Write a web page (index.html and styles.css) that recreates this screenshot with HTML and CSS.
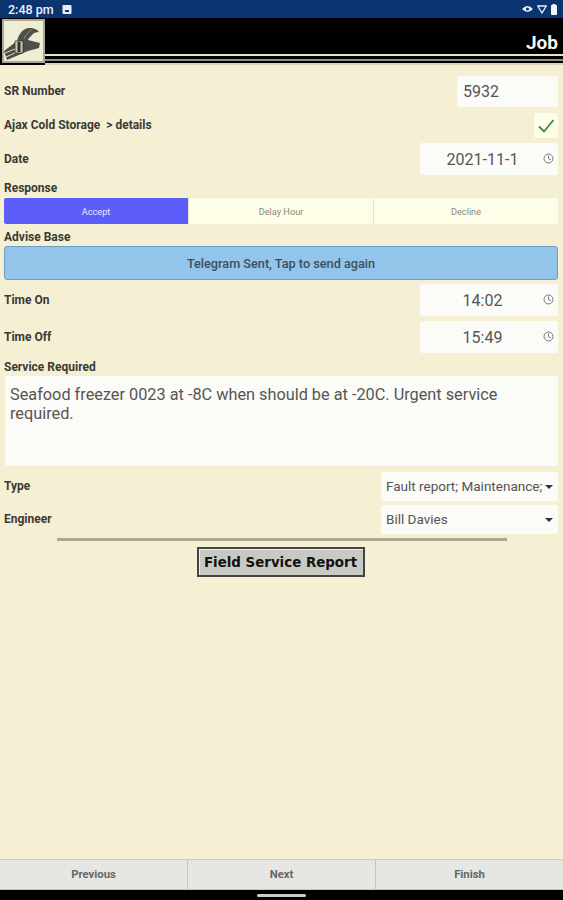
FILE: index.html
```html
<!DOCTYPE html>
<html lang="en">
<head>
    <meta charset="UTF-8">
    <meta name="viewport" content="width=device-width, initial-scale=1.0">
    <title>Job</title>
    <link rel="stylesheet" href="styles.css">
</head>
<body>
    <div class="status-bar">
        <div class="status-left">
            <span class="clock">2:48 pm</span>
            <svg class="status-icon" width="10" height="9" viewBox="0 0 10 9"><rect x="0.5" y="0" width="9" height="9" rx="1" fill="#e8eef6"/><rect x="3" y="5" width="4" height="2" fill="#0a3570"/></svg>
        </div>
        <div class="status-right">
            <svg width="11" height="8" viewBox="0 0 11 8"><path d="M0 4 Q5.500 -2 11 4 Q5.500 10 0 4Z" fill="#e8eef6"/><circle cx="5.500" cy="4" r="1.600" fill="#0a3570"/></svg>
            <svg width="10" height="9" viewBox="0 0 10 9"><path d="M0.800 1 H9.200 L5 8Z" fill="none" stroke="#e8eef6" stroke-width="1.300"/></svg>
            <svg width="6" height="11" viewBox="0 0 6 11"><rect x="0" y="1" width="6" height="10" rx="1" fill="#f4f6fa"/><rect x="1.500" y="0" width="3" height="1" fill="#f4f6fa"/></svg>
        </div>
    </div>

    <header class="app-header">
        <div class="logo">
            <svg width="39" height="39" viewBox="0 0 39 39">
                <path d="M13 19 C15 11 20 5 27 6 C31 6.500 34 8 35 10 C32 10 29 11 28 13 C26 15 24 17 24 18 L36 21 L35 26 L24 29 L3 38 L0 29Z" fill="#4f4f4a"/>
                <path d="M11 19 h8 v12 h-8Z" fill="#c9c8b6" stroke="#33332f" stroke-width="0.800"/>
                <path d="M13.500 20 h3 v10 h-3Z" fill="#33332f"/>
                <path d="M1 31 L11 27 M2 35 L11 31" stroke="#d9d8c6" stroke-width="1"/>
                <path d="M20 17 C21 13 24 10 28 8" fill="none" stroke="#8b8a7e" stroke-width="1"/>
            </svg>
        </div>
        <div class="header-main">
            <div class="header-title">Job</div>
            <div class="header-rules"></div>
        </div>
    </header>

    <main class="form">
        <div class="row row-sr">
            <span class="label">SR Number</span>
            <div class="field field-sr">5932</div>
        </div>
        <div class="row row-check">
            <span class="label">Ajax Cold Storage &nbsp;&gt; details</span>
            <div class="check-box">
                <svg width="18" height="16" viewBox="0 0 18 16"><path d="M2 8.500 L7 13.500 L16.500 2" fill="none" stroke="#3d8b40" stroke-width="1.800"/></svg>
            </div>
        </div>
        <div class="row row-date">
            <span class="label">Date</span>
            <div class="field field-time">
                <span class="time-value">2021-11-1</span>
                <svg class="clock-icon" width="11" height="11" viewBox="0 0 11 11"><circle cx="5.500" cy="5.500" r="4.500" fill="none" stroke="#777" stroke-width="1"/><path d="M5.500 2.500 V5.500 L8 7" fill="none" stroke="#777" stroke-width="1"/></svg>
            </div>
        </div>

        <div class="label label-response">Response</div>
        <div class="segments">
            <div class="segment active">Accept</div>
            <div class="segment">Delay Hour</div>
            <div class="segment">Decline</div>
        </div>

        <div class="label label-advise">Advise Base</div>
        <button class="telegram">Telegram Sent, Tap to send again</button>

        <div class="row row-time-on">
            <span class="label">Time On</span>
            <div class="field field-time">
                <span class="time-value">14:02</span>
                <svg class="clock-icon" width="11" height="11" viewBox="0 0 11 11"><circle cx="5.500" cy="5.500" r="4.500" fill="none" stroke="#777" stroke-width="1"/><path d="M5.500 2.500 V5.500 L8 7" fill="none" stroke="#777" stroke-width="1"/></svg>
            </div>
        </div>
        <div class="row row-time-off">
            <span class="label">Time Off</span>
            <div class="field field-time">
                <span class="time-value">15:49</span>
                <svg class="clock-icon" width="11" height="11" viewBox="0 0 11 11"><circle cx="5.500" cy="5.500" r="4.500" fill="none" stroke="#777" stroke-width="1"/><path d="M5.500 2.500 V5.500 L8 7" fill="none" stroke="#777" stroke-width="1"/></svg>
            </div>
        </div>

        <div class="label label-service">Service Required</div>
        <div class="service-text">Seafood freezer 0023 at -8C when should be at -20C. Urgent service required.</div>

        <div class="row row-type">
            <span class="label">Type</span>
            <div class="select">
                <span>Fault report; Maintenance;</span>
                <span class="caret"></span>
            </div>
        </div>
        <div class="row row-engineer">
            <span class="label">Engineer</span>
            <div class="select">
                <span>Bill Davies</span>
                <span class="caret"></span>
            </div>
        </div>

        <div class="divider"></div>
        <div class="report-wrap">
            <button class="report">Field Service Report</button>
        </div>
    </main>

    <footer class="footer">
        <div class="footer-btn">Previous</div>
        <div class="footer-btn">Next</div>
        <div class="footer-btn">Finish</div>
    </footer>
    <div class="nav-bar"><span class="nav-pill"></span></div>
</body>
</html>
```

FILE: styles.css
```css
html, body {
    height: 100%;
}

body {
    margin: 0;
    height: 900px;
    display: flex;
    flex-direction: column;
    overflow: hidden;
    background-color: #f5f0d3;
    font-family: Roboto, "Liberation Sans", sans-serif;
    color: #333;
}

.status-bar {
    height: 18px;
    flex: none;
    background-color: #0a3570;
    display: flex;
    align-items: center;
    justify-content: space-between;
    padding: 0 6px 0 8px;
    color: #eef2f8;
}

.status-left, .status-right {
    display: flex;
    align-items: center;
}

.status-left {
    gap: 8px;
}

.status-right {
    gap: 4px;
}

.clock {
    font-size: 12.500px;
    font-weight: 500;
}

.app-header {
    height: 47px;
    flex: none;
    background-color: #000;
    display: flex;
    padding: 1px 0 0 2px;
    box-sizing: border-box;
}

.logo {
    width: 43px;
    height: 44px;
    box-sizing: border-box;
    border: 2px solid #a9a89c;
    background-color: #f0edd2;
    display: flex;
    align-items: center;
    justify-content: center;
}

.header-main {
    flex: 1;
    display: flex;
    flex-direction: column;
    justify-content: flex-end;
}

.header-title {
    color: #f4f4f0;
    font-size: 19px;
    font-weight: 700;
    text-align: right;
    padding-right: 5px;
    line-height: 20px;
    margin-bottom: 1px;
}

.header-rules {
    height: 11px;
    box-sizing: border-box;
    border-top: 2px solid #e6e2c2;
    background: linear-gradient(#000 0 3px, #8f8e80 3px 5px, #000 5px 7px, #d9d5b8 7px);
    margin-bottom: 0;
}

.form {
    flex: 1;
    padding: 11px 5px 0 4px;
}

.row {
    display: flex;
    align-items: center;
    justify-content: space-between;
}

.label {
    font-size: 12px;
    font-weight: 700;
    color: #3a3a36;
    line-height: 13px;
}

.field {
    background-color: #fbfbf7;
    border-radius: 2px;
    box-sizing: border-box;
    color: #555;
    font-size: 16px;
}

.field-sr {
    width: 101px;
    height: 31px;
    line-height: 31px;
    padding-left: 6px;
}

.row-check {
    margin-top: 6px;
}

.check-box {
    width: 24px;
    height: 25px;
    background-color: #fdfde8;
    border-radius: 2px;
    display: flex;
    align-items: center;
    justify-content: center;
}

.row-date {
    margin-top: 5px;
}

.field-time {
    width: 138px;
    height: 32px;
    display: flex;
    align-items: center;
    position: relative;
    justify-content: center;
    padding-right: 13px;
}

.clock-icon {
    position: absolute;
    right: 4px;
    top: 10px;
}

.label-response {
    margin-top: 7px;
}

.segments {
    display: flex;
    height: 26px;
    margin-top: 3px;
    font-size: 9.200px;
}

.segment {
    flex: 1;
    display: flex;
    align-items: center;
    justify-content: center;
    background-color: #fdfde8;
    color: #8a8a80;
    border-left: 1px solid #e8e6cc;
}

.segment.active {
    background-color: #5d5dfb;
    color: #e8e8ff;
    border-left: none;
    border-radius: 2px 0 0 2px;
}

.label-advise {
    margin-top: 7px;
}

.telegram {
    display: block;
    width: 100%;
    height: 34px;
    margin-top: 2px;
    background-color: #92c5e9;
    border: 1px solid #6f9fc0;
    border-radius: 3px;
    color: #3c4f5c;
    font-family: inherit;
    font-size: 12.700px;
    font-weight: 500;
    padding: 0;
}

.row-time-on {
    margin-top: 4px;
}

.row-time-off {
    margin-top: 5px;
}

.label-service {
    margin-top: 8px;
}

.service-text {
    height: 90px;
    margin: 2px 0 0 1px;
    box-sizing: border-box;
    padding: 9px 5px;
    background-color: #fbfbf7;
    border-radius: 2px;
    color: #555;
    font-size: 16.300px;
    line-height: 19px;
}

.row-type {
    margin-top: 6px;
}

.row-engineer {
    margin-top: 4px;
}

.select {
    width: 177px;
    height: 29px;
    box-sizing: border-box;
    background-color: #fbfbf7;
    border-radius: 2px;
    padding: 0 5px 2px;
    display: flex;
    align-items: center;
    justify-content: space-between;
    font-size: 13.500px;
    color: #555;
    white-space: nowrap;
}

.caret {
    width: 0;
    height: 0;
    margin-top: 2px;
    border-left: 4px solid transparent;
    border-right: 4px solid transparent;
    border-top: 4px solid #333;
}

.divider {
    height: 3px;
    margin: 4px 51px 0 53px;
    background-color: #a9a893;
}

.report-wrap {
    display: flex;
    justify-content: center;
    margin-top: 6px;
    padding-right: 1px;
}

.report {
    width: 168px;
    height: 30px;
    padding: 0;
    background-color: #c9c9c4;
    border: 2px solid #444;
    box-shadow: inset 1px 1px 0 #eee;
    color: #111;
    font-family: "DejaVu Sans", sans-serif;
    font-size: 13.400px;
    font-weight: 700;
}

.footer {
    flex: none;
    height: 31px;
    display: flex;
    background-color: #e6e6e3;
    border-top: 1px solid #cfccc0;
    border-bottom: 1px solid #c5c5c2;
    box-sizing: border-box;
}

.footer-btn {
    flex: 1;
    display: flex;
    align-items: center;
    justify-content: center;
    font-size: 11.300px;
    font-weight: 700;
    color: #666;
    border-left: 1px solid #c5c5c0;
}

.footer-btn:first-child {
    border-left: none;
}

.nav-bar {
    flex: none;
    height: 10px;
    background-color: #000;
    display: flex;
    align-items: center;
    justify-content: center;
}

.nav-pill {
    width: 49px;
    height: 3px;
    border-radius: 2px;
    background-color: #ccc;
}
```
